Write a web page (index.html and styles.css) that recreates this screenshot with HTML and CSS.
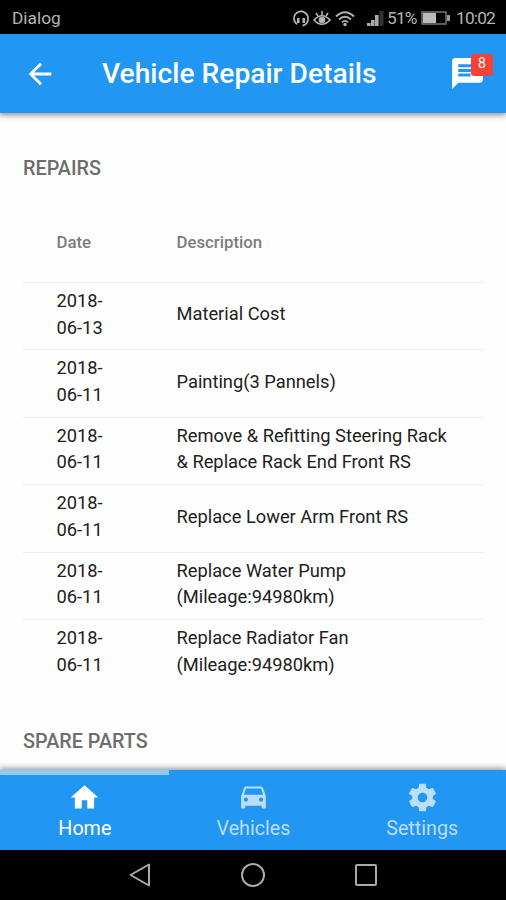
FILE: index.html
```
<!DOCTYPE html>
<html lang="en">
<head>
    <meta charset="UTF-8">
    <meta name="viewport" content="width=device-width, initial-scale=1.0">
    <title>Vehicle Repair Details</title>
    <link rel="stylesheet" href="styles.css">
</head>
<body>
    <div class="status-bar">
        <span class="carrier">Dialog</span>
        <svg class="headset" width="16" height="17" viewBox="0 0 16 17">
            <path d="M4 14.200A7 7 0 1 1 15 8.500Q15 14.500 9.500 15.600" fill="none" stroke="#b5b5b5" stroke-width="1.700"/>
            <path d="M4 8h2.500v5H4zM9.500 8H12v5H9.500z" fill="#b5b5b5"/>
        </svg>
        <svg class="eye" width="18" height="17" viewBox="0 0 18 17">
            <path d="M1 10Q9 1.500 17 10Q9 18.500 1 10z" fill="none" stroke="#b5b5b5" stroke-width="1.700"/>
            <circle cx="9" cy="10" r="3.300" fill="#b5b5b5"/>
            <path d="M9 1v4M3 3l2 3M15 3l-2 3" stroke="#b5b5b5" stroke-width="1.600"/>
        </svg>
        <svg class="wifi" width="20" height="17" viewBox="0 0 20 17">
            <path d="M1 6.500Q10-2 19 6.500M4 9.500Q10 4 16 9.500M7 12.300Q10 9.500 13 12.300" fill="none" stroke="#b5b5b5" stroke-width="1.800"/>
            <circle cx="10" cy="14.500" r="1.700" fill="#b5b5b5"/>
        </svg>
        <svg class="signal" width="17" height="17" viewBox="0 0 17 17">
            <path d="M0 13h3.600v3H0zM4 10h3.600v6H4zM8 5h3.600v11H8z" fill="#aaa"/>
            <path d="M12.500 1h4v15h-4z" fill="#333"/>
        </svg>
        <span class="percent">51%</span>
        <svg class="battery" width="29" height="14" viewBox="0 0 29 14">
            <path d="M1 1h24v12H1z" fill="none" stroke="#777" stroke-width="1.500"/>
            <path d="M2 2h13v10H2z" fill="#bbb"/>
            <path d="M26 4h3v6h-3z" fill="#999"/>
        </svg>
        <span class="clock">10:02</span>
    </div>

    <header class="toolbar">
        <svg class="back" width="34" height="34" viewBox="0 0 24 24">
            <path d="M20 11H7.830l5.590-5.590L12 4l-8 8 8 8 1.410-1.410L7.830 13H20v-2z"/>
        </svg>
        <h1>Vehicle Repair Details</h1>
        <div class="messages">
            <svg width="37" height="37" viewBox="0 0 24 24">
                <path d="M20 2H4c-1.100 0-1.990.9-1.990 2L2 22l4-4h14c1.100 0 2-.9 2-2V4c0-1.100-.9-2-2-2zM6 9h12v2H6V9zm8 5H6v-2h8v2zm4-6H6V6h12v2z"/>
            </svg>
            <span class="badge">8</span>
        </div>
    </header>

    <main>
        <h2>REPAIRS</h2>
        <table>
            <thead>
                <tr>
                    <th class="date">Date</th>
                    <th>Description</th>
                </tr>
            </thead>
            <tbody>
                <tr>
                    <td>2018-<br>06-13</td>
                    <td>Material Cost</td>
                </tr>
                <tr>
                    <td>2018-<br>06-11</td>
                    <td>Painting(3 Pannels)</td>
                </tr>
                <tr>
                    <td>2018-<br>06-11</td>
                    <td>Remove &amp; Refitting Steering Rack<br>&amp; Replace Rack End Front RS</td>
                </tr>
                <tr>
                    <td>2018-<br>06-11</td>
                    <td>Replace Lower Arm Front RS</td>
                </tr>
                <tr>
                    <td>2018-<br>06-11</td>
                    <td>Replace Water Pump<br>(Mileage:94980km)</td>
                </tr>
                <tr>
                    <td>2018-<br>06-11</td>
                    <td>Replace Radiator Fan<br>(Mileage:94980km)</td>
                </tr>
            </tbody>
        </table>
        <h2>SPARE PARTS</h2>
    </main>

    <nav class="tabbar">
        <a class="tab active">
            <svg width="33" height="33" viewBox="0 0 24 24">
                <path d="M10 20v-6h4v6h5v-8h3L12 3 2 12h3v8z"/>
            </svg>
            <span>Home</span>
        </a>
        <a class="tab">
            <svg width="33" height="33" viewBox="0 0 24 24">
                <path d="M18.920 5.010C18.720 4.420 18.160 4 17.500 4h-11c-.66 0-1.210.42-1.420 1.010L3 11v8c0 .55.45 1 1 1h1c.55 0 1-.45 1-1v-1h12v1c0 .55.45 1 1 1h1c.55 0 1-.45 1-1v-8l-2.080-5.990zM6.500 15c-.83 0-1.500-.67-1.500-1.500S5.670 12 6.500 12s1.500.67 1.500 1.500S7.330 15 6.500 15zm11 0c-.83 0-1.500-.67-1.500-1.500s.67-1.500 1.500-1.500 1.500.67 1.500 1.500-.67 1.500-1.500 1.500zM5 10l1.500-4.500h11L19 10H5z"/>
            </svg>
            <span>Vehicles</span>
        </a>
        <a class="tab">
            <svg width="33" height="33" viewBox="0 0 24 24">
                <path d="M19.430 12.980c.04-.32.07-.64.07-.98s-.03-.66-.07-.98l2.110-1.650c.19-.15.24-.42.12-.64l-2-3.460c-.12-.22-.39-.3-.61-.22l-2.490 1c-.52-.4-1.080-.73-1.690-.98l-.38-2.650C14.460 2.180 14.250 2 14 2h-4c-.25 0-.46.18-.49.42l-.38 2.650c-.61.25-1.170.59-1.690.98l-2.490-1c-.23-.09-.49 0-.61.22l-2 3.460c-.13.22-.07.49.12.64l2.110 1.650c-.04.32-.07.65-.07.98s.03.66.07.98l-2.110 1.650c-.19.15-.24.42-.12.64l2 3.460c.12.22.39.3.61.22l2.490-1c.52.4 1.080.73 1.690.98l.38 2.650c.03.24.24.42.49.42h4c.25 0 .46-.18.49-.42l.38-2.650c.61-.25 1.170-.59 1.690-.98l2.490 1c.23.09.49 0 .61-.22l2-3.460c.12-.22.07-.49-.12-.64l-2.110-1.650zM12 15.500c-1.930 0-3.500-1.570-3.500-3.500s1.570-3.500 3.500-3.500 3.500 1.570 3.500 3.500-1.570 3.500-3.500 3.500z"/>
            </svg>
            <span>Settings</span>
        </a>
    </nav>

    <div class="system-nav">
        <svg width="26" height="26" viewBox="0 0 26 26"><path d="M22 2.500v21L3.500 13z"/></svg>
        <svg width="26" height="26" viewBox="0 0 26 26"><circle cx="13" cy="13" r="11"/></svg>
        <svg width="26" height="26" viewBox="0 0 26 26"><rect x="3" y="3" width="20" height="20" rx="1"/></svg>
    </div>
</body>
</html>
```
FILE: styles.css
```
* {
    box-sizing: border-box;
}
body {
    font-family: Roboto, sans-serif;
    background: #fefefe;
    display: flex;
    flex-direction: column;
    height: 900px;
    margin: 0;
    overflow: hidden;
}
svg {
    display: block;
    flex: none;
}
.status-bar {
    display: flex;
    align-items: center;
    height: 34px;
    padding: 2px 10px 0 12px;
    background: #000;
    color: #b5b5b5;
    font-size: 17.3px;
}
.carrier {
    flex: 1;
}
.percent {
    width: 30px;
    letter-spacing: -0.8px;
}
.clock {
    width: 40px;
    letter-spacing: -0.8px;
}
.eye {
    margin-left: 4px;
}
.wifi {
    margin-left: 4px;
}
.signal {
    margin: 0 3px 0 12px;
}
.battery {
    margin: 0 6px 0 4px;
}
.toolbar {
    display: flex;
    align-items: center;
    height: 79px;
    padding: 0 20px 0 23px;
    background: #2196f3;
    box-shadow: 0 1px 6px 1px rgba(0,0,0,0.45);
    z-index: 1;
}
.toolbar svg {
    fill: #fff;
}
h1 {
    flex: 1;
    margin: 0 0 0 45px;
    color: #fff;
    font-size: 28.2px;
    font-weight: 500;
    white-space: nowrap;
}
.messages {
    position: relative;
}
.badge {
    position: absolute;
    top: -1px;
    right: -7px;
    width: 22px;
    height: 22px;
    border-radius: 3px;
    background: #f44336;
    color: #fff;
    font-size: 14px;
    line-height: 18px;
    text-align: center;
}
main {
    flex: 1;
    padding: 43px 22px 0 23px;
}
h2 {
    margin: 0;
    color: #6d6d6d;
    font-size: 19.8px;
    font-weight: 500;
    line-height: 26px;
}
table {
    width: 100%;
    margin: 21px 0 43px;
    border-collapse: separate;
    border-spacing: 0;
    table-layout: fixed;
}
th, td {
    padding: 0 0 0 33.5px;
    text-align: left;
    vertical-align: middle;
}
th {
    height: 79px;
    padding-bottom: 2px;
    color: #7c7c7c;
    font-size: 16.8px;
    font-weight: 500;
}
.date {
    width: 120px;
}
td {
    height: 67.4px;
    padding-bottom: 3px;
    border-top: 1px solid #ececec;
    color: #212121;
    font-size: 18.3px;
    line-height: 26.6px;
}
.tabbar {
    display: flex;
    height: 80px;
    background: #2196f3;
    box-shadow: 0 -1px 6px 1px rgba(0,0,0,0.4);
    z-index: 1;
}
.tab {
    flex: 1;
    display: flex;
    flex-direction: column;
    align-items: center;
    padding: 11px 0 0 1px;
    color: #bbdefb;
    font-size: 19.7px;
    line-height: 29px;
}
.tab svg {
    fill: currentColor;
}
.tab.active {
    padding-top: 6px;
    border-top: 5px solid #90caf9;
    color: #fff;
}
.system-nav {
    display: flex;
    justify-content: center;
    align-items: center;
    gap: 87px;
    height: 50px;
    background: #000;
}
.system-nav svg {
    fill: none;
    stroke: #aaa;
    stroke-width: 2;
    stroke-linejoin: round;
}
```
